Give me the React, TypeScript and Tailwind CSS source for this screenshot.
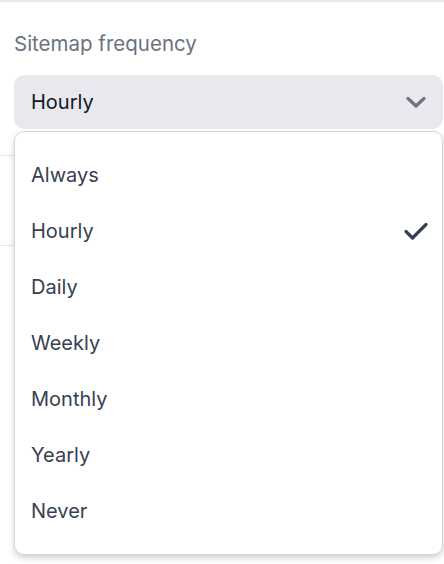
const options = ["Always", "Hourly", "Daily", "Weekly", "Monthly", "Yearly", "Never"];

export default function App() {
  const selected = "Hourly";

  return (
    <div
      className="w-[444px] h-[564px] bg-white overflow-hidden"
      style={{ fontFamily: "Inter, 'Noto Sans', sans-serif" }}
    >
      <div className="h-[2px] bg-[#e8e8ec]" />

      <div className="relative pl-[14px] pr-[1px]">
        {/* Label */}
        <div className="pt-[28px] h-[73px] text-[20.5px] leading-[28px] text-[#6b7280]">
          Sitemap frequency
        </div>

        {/* Select button */}
        <div className="h-[54px] rounded-[10px] bg-[#e9e8ef] flex items-center justify-between pl-[17px] pr-[16px]">
          <span className="text-[20px] text-[#111827]">{selected}</span>
          <svg width="22" height="14" viewBox="0 0 22 14" fill="none">
            <path
              d="M3 3.5 L11 11 L19 3.5"
              stroke="#6b7280"
              strokeWidth="3.2"
              strokeLinecap="round"
              strokeLinejoin="round"
            />
          </svg>
        </div>

        {/* Page content behind the menu */}
        <div className="-ml-[14px]">
          <div className="h-[26px]" />
          <div className="h-[90px] border-t border-[#e5e7eb]" />
          <div className="h-[90px] border-t border-[#e5e7eb]" />
        </div>

        {/* Dropdown menu */}
        <div className="absolute left-[14px] right-[1px] top-[129px] bg-white rounded-[10px] border border-[#d4d6dc] shadow-[0_3px_6px_rgba(0,0,0,0.18)] py-[15px]">
          {options.map((opt) => (
            <div
              key={opt}
              className="h-[56px] flex items-center justify-between pl-[16px] pr-[13px]"
            >
              <span className="text-[20px] text-[#374151]">{opt}</span>
              {opt === selected && (
                <svg width="26" height="20" viewBox="0 0 26 20" fill="none">
                  <path
                    d="M3 10.5 L9.5 17 L23 3.5"
                    stroke="#374151"
                    strokeWidth="3.2"
                    strokeLinecap="round"
                    strokeLinejoin="round"
                  />
                </svg>
              )}
            </div>
          ))}
        </div>
      </div>
    </div>
  );
}
